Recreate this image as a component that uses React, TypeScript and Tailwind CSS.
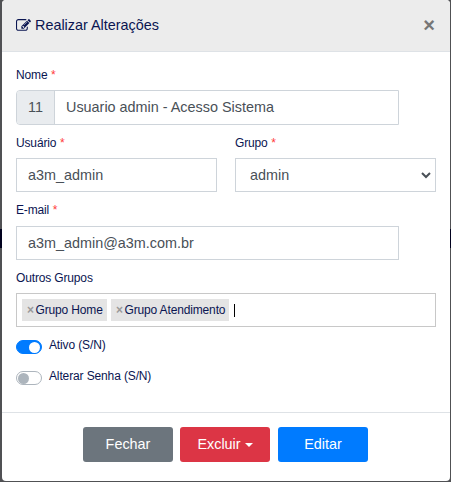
import type { ReactNode } from 'react';

function Label({ children, required }: { children: ReactNode; required?: boolean }) {
  return (
    <div className="h-[18px] whitespace-nowrap text-[12px] leading-[18px] tracking-[-0.15px] text-[#0a1551]">
      {children}
      {required && <span className="ml-[0.500px] text-[#ff3b3b]"> *</span>}
    </div>
  );
}

function EditIcon() {
  return (
    <svg viewBox="0 0 1792 1792" className="h-[15px] w-[15px] shrink-0" fill="currentColor">
      <path d="M888 1184l116-116-152-152-116 116v56h96v96h56zm440-720q-16-16-33 1l-350 350q-17 17-1 33t33-1l350-350q17-17 1-33zm80 594v190q0 119-84.5 203.500t-203.500 84.500h-832q-119 0-203.500-84.500t-84.500-203.500v-832q0-119 84.500-203.500t203.500-84.500h832q63 0 117 25 15 7 18 23 3 17-9 29l-49 49q-14 14-32 8-23-6-45-6h-832q-66 0-113 47t-47 113v832q0 66 47 113t113 47h832q66 0 113-47t47-113v-126q0-13 9-22l64-64q15-15 35-7t20 29zm-96-738l288 288-672 672h-288v-288zm444 132l-92 92-288-288 92-92q28-28 68-28t68 28l152 152q28 28 28 68t-28 68z" />
    </svg>
  );
}

function Tag({ children, className }: { children: ReactNode; className: string }) {
  return (
    <div className={`flex h-[22px] items-center whitespace-nowrap bg-[#e4e4e4] pl-[5px] text-[12px] tracking-[-0.15px] text-[#0a1551] ${className}`}>
      <span className="mr-[1.500px] w-[7px] font-bold text-[#999]">×</span>
      {children}
    </div>
  );
}

function Toggle({ on, label }: { on?: boolean; label: string }) {
  return (
    <div className="flex h-[31px] items-start">
      <div className={`mt-[4px] flex h-[14px] w-[26px] items-center rounded-full border ${on ? 'justify-end border-[#007bff] bg-[#007bff]' : 'border-[#adb5bd] bg-white'}`}>
        <div className={`mx-px h-[11px] w-[11px] rounded-full ${on ? 'bg-white' : 'bg-[#adb5bd]'}`} />
      </div>
      <span className="ml-[7px] text-[12px] leading-[18px] tracking-[-0.13px] text-[#0a1551]">{label}</span>
    </div>
  );
}

const field = 'flex h-[34px] items-center border border-[#ced4da] bg-white pt-[2px] text-[14.4px] text-[#495057] whitespace-nowrap';
const button = 'flex h-[35px] w-[90px] items-center justify-center rounded-[3px] text-[14.4px] text-white';

export default function App() {
  return (
    <div className="flex h-[482px] w-[451px] overflow-hidden bg-[#505154] font-['Liberation_Sans',Arial,sans-serif]">
      <div className="w-[2px] shrink-0 pt-[229px]">
        <div className="h-[19px] bg-[#02021f]" />
      </div>
      <div className="flex h-[481px] w-[448px] flex-col rounded-[4px] bg-white">
        <header className="flex h-[52px] shrink-0 items-center rounded-t-[4px] border-b border-[#dee2e6] bg-[#ececec] px-[14px] text-[#0a1551]">
          <EditIcon />
          <h1 className="ml-[4px] text-[14.4px]">Realizar Alterações</h1>
          <span className="mb-[2px] ml-auto mr-px text-[20px] font-bold leading-none text-[#767676]">×</span>
        </header>

        <main className="flex h-[360px] shrink-0 flex-col px-[14px] pt-[14px]">
          <Label required>Nome</Label>
          <div className="mt-[6px] flex h-[35px] w-[383px] rounded-l-[4px] border border-[#ced4da] text-[14.4px] text-[#495057]">
            <div className="flex w-[38px] items-center justify-center rounded-l-[3px] border-r border-[#ced4da] bg-[#e9ecef]">11</div>
            <div className="flex items-center whitespace-nowrap pl-[11px]">Usuario admin - Acesso Sistema</div>
          </div>

          <div className="mt-[9px] grid grid-cols-2 gap-[18px]">
            <div>
              <Label required>Usuário</Label>
              <div className={`${field} mt-[6px] pl-[11px]`}>a3m_admin</div>
            </div>
            <div>
              <Label required>Grupo</Label>
              <div className={`${field} mt-[6px] justify-between pl-[14px] pr-[4px]`}>
                admin
                <svg viewBox="0 0 10 8" className="mb-[2px] h-[8px] w-[10px]" fill="none" stroke="#495057" strokeWidth="2">
                  <path d="M1 2L5 6L9 2" />
                </svg>
              </div>
            </div>
          </div>

          <div className="mt-[9px]">
            <Label required>E-mail</Label>
            <div className={`${field} mt-[7px] w-[383px] pl-[11px]`}>a3m_admin@a3m.com.br</div>
          </div>

          <div className="mt-[9px]">
            <Label>Outros Grupos</Label>
            <div className="mt-[6px] flex h-[34px] items-center border border-[#c8c8c8] pl-[5px]">
              <Tag className="w-[85px]">Grupo Home</Tag>
              <Tag className="ml-[4px] w-[118px]">Grupo Atendimento</Tag>
              <div className="ml-[5px] h-[13px] w-px bg-black" />
            </div>
          </div>

          <div className="mt-[9px]">
            <Toggle on label="Ativo (S/N)" />
            <Toggle label="Alterar Senha (S/N)" />
          </div>
        </main>

        <footer className="flex flex-1 border-t border-[#dee2e6] pl-[81px] pt-[14px]">
          <button className={`${button} bg-[#6c757d]`}>Fechar</button>
          <button className={`${button} ml-[7px] bg-[#dc3545]`}>
            Excluir
            <span className="ml-[4px] border-x-[4.500px] border-t-[4.500px] border-x-transparent border-t-white" />
          </button>
          <button className={`${button} ml-[8px] bg-[#007bff]`}>Editar</button>
        </footer>
      </div>
      <div className="w-px shrink-0 pt-[229px]">
        <div className="h-[19px] bg-[#02021f]" />
      </div>
    </div>
  );
}
